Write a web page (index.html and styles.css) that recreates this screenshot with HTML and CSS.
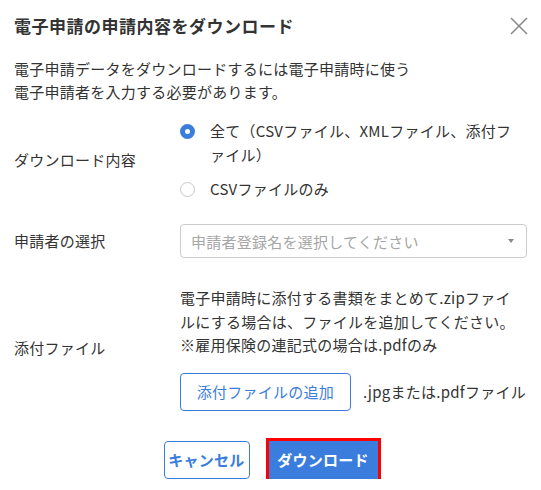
FILE: index.html
```html
<!DOCTYPE html>
<html lang="ja">
<head>
<meta charset="utf-8">
<link rel="stylesheet" href="styles.css">
</head>
<body>
<div class="dialog">
  <div class="header">
    <h1 class="title">電子申請の申請内容をダウンロード</h1>
    <button class="close" aria-label="閉じる">
      <svg width="18" height="18" viewBox="0 0 18 18"><path d="M1 1L17 17M17 1L1 17" stroke="#8a8a8a" stroke-width="1.6" fill="none"/></svg>
    </button>
  </div>
  <p class="desc">電子申請データをダウンロードするには電子申請時に使う<br>電子申請者を入力する必要があります。</p>

  <div class="form">
    <div class="row row-content">
      <div class="label">ダウンロード内容</div>
      <div class="field radios">
        <label class="radio"><span class="dot checked"></span><span class="rtext">全て（CSVファイル、XMLファイル、添付ファイル）</span></label>
        <label class="radio"><span class="dot"></span><span class="rtext">CSVファイルのみ</span></label>
      </div>
    </div>

    <div class="row row-select">
      <div class="label">申請者の選択</div>
      <div class="field">
        <div class="select"><span class="placeholder">申請者登録名を選択してください</span><span class="caret"></span></div>
      </div>
    </div>

    <div class="row row-attach">
      <div class="label">添付ファイル</div>
      <div class="field">
        <p class="note">電子申請時に添付する書類をまとめて.zipファイルにする場合は、ファイルを追加してください。<br>※雇用保険の連記式の場合は.pdfのみ</p>
        <div class="attach">
          <button class="btn-outline btn-add">添付ファイルの追加</button>
          <span class="hint">.jpgまたは.pdfファイル</span>
        </div>
      </div>
    </div>
  </div>

  <div class="footer">
    <button class="btn-outline btn-cancel">キャンセル</button>
    <button class="btn-primary">ダウンロード</button>
  </div>
</div>
</body>
</html>
```

FILE: styles.css
```css
* { box-sizing: border-box; }
html, body { margin: 0; padding: 0; background: #fff; }
body {
  font-family: "Noto Sans CJK JP", "Noto Sans", sans-serif;
  color: #333;
  font-size: 15px;
  letter-spacing: 0.25px;
}
.dialog {
  width: 541px;
  padding: 14px 14px 0 14px;
}
.header {
  display: flex;
  justify-content: space-between;
  align-items: center;
  height: 24px;
}
.title {
  margin: 0;
  font-size: 17px;
  font-weight: 700;
  line-height: 24px;
  letter-spacing: 0.5px;
  color: #333;
}
.close {
  border: none;
  background: none;
  padding: 0;
  margin-right: -1px;
  width: 18px;
  height: 18px;
  display: flex;
}
.desc {
  margin: 19px 0 0 0;
  line-height: 23px;
}
.form {
  margin-top: 16px;
}
.row {
  display: grid;
  grid-template-columns: 166px 1fr;
  align-items: center;
}
.label {
  line-height: 24px;
}
.radios {
  display: flex;
  flex-direction: column;
  gap: 10px;
}
.radio {
  display: flex;
  align-items: flex-start;
  line-height: 24px;
}
.dot {
  flex: none;
  width: 15px;
  height: 15px;
  border-radius: 50%;
  border: 1px solid #c8c8c8;
  margin-top: 5px;
  background: #fff;
}
.dot.checked {
  border: 5px solid #3b7ddd;
}
.rtext {
  margin-left: 15px;
  width: 306px;
  line-break: anywhere;
}
.row-select {
  margin-top: 23px;
}
.select {
  height: 34px;
  border: 1px solid #cccccc;
  border-radius: 4px;
  display: flex;
  align-items: center;
  justify-content: space-between;
  padding: 0 12px 0 10px;
}
.placeholder {
  color: #a6a6a6;
}
.caret {
  width: 0;
  height: 0;
  border-left: 3.5px solid transparent;
  border-right: 3.5px solid transparent;
  border-top: 4px solid #888;
}
.row-attach {
  margin-top: 28px;
}
.note {
  margin: 0;
  line-height: 23.5px;
  line-break: anywhere;
  padding-right: 10px;
}
.attach {
  margin-top: 16px;
  display: flex;
  align-items: center;
  gap: 12px;
}
.btn-outline {
  font-family: inherit;
  font-size: 15px;
  letter-spacing: 0.25px;
  background: #fff;
  border: 1px solid #3b7ddd;
  color: #3b7ddd;
  border-radius: 4px;
  height: 38px;
  padding: 0 12px;
  white-space: nowrap;
}
.btn-add {
  width: 171px;
  padding: 0;
}
.hint {
  color: #333;
}
.footer {
  display: flex;
  justify-content: center;
  gap: 19px;
  margin-top: 30px;
}
.btn-cancel {
  font-weight: 700;
  width: 86px;
  padding: 0;
}
.btn-primary {
  font-family: inherit;
  font-size: 15px;
  font-weight: 700;
  letter-spacing: 0.25px;
  color: #fff;
  background: #3b7ddd;
  border: none;
  border-radius: 0;
  height: 38px;
  width: 109px;
  outline: 3px solid #ff0000;
  white-space: nowrap;
}
```
